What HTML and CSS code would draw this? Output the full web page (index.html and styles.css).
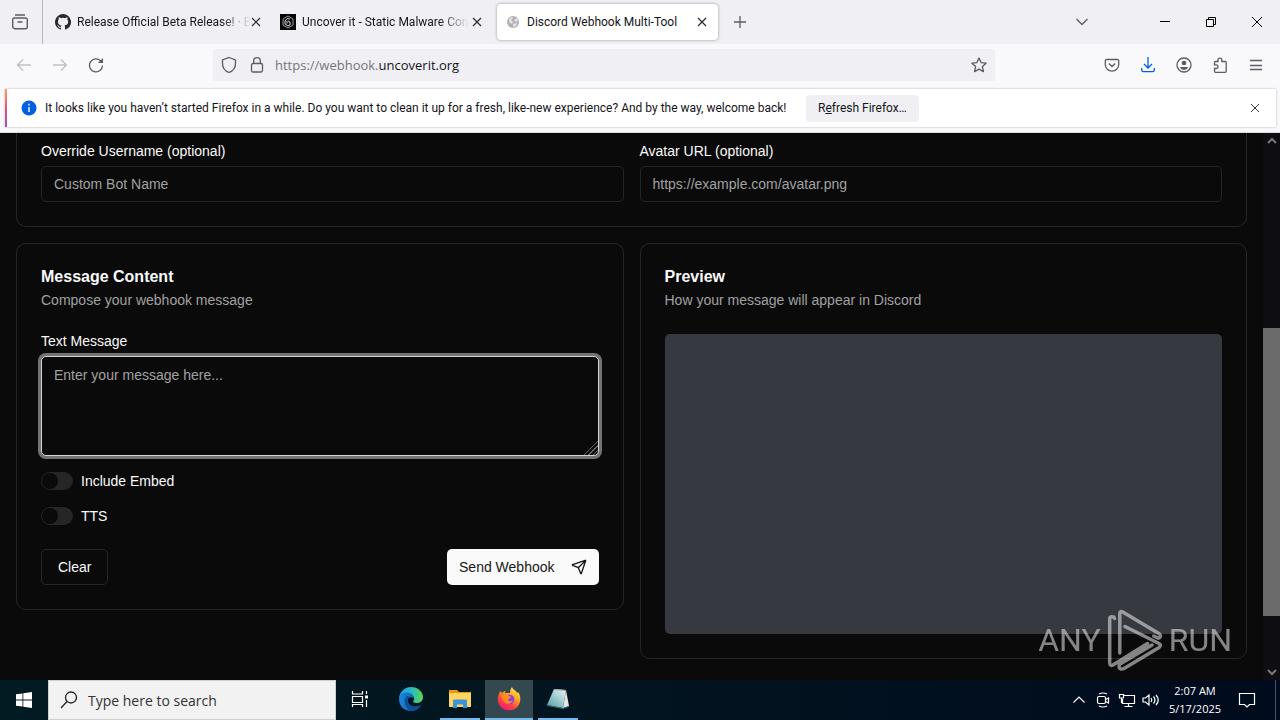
FILE: index.html
```html
<!DOCTYPE html>
<html lang="en">

<head>
    <meta charset="utf-8">
    <title>Discord Webhook Multi-Tool</title>
    <link rel="stylesheet" href="styles.css">
</head>

<body>
    <!-- tabs -->
    <header class="tabbar">
        <button class="viewBtn" aria-label="Firefox View">
            <svg width="18" height="18" viewBox="0 0 18 18" fill="none" stroke="#5b5b66" stroke-width="1.4"><path d="M4 2h10M3.400 5h11.200a1.700 1.700 0 0 1 1.700 1.700v7a2 2 0 0 1-2 2H3.700a2 2 0 0 1-2-2v-7A1.700 1.700 0 0 1 3.400 5zM6.500 9h5" /></svg>
        </button>
        <div class="tabs">
            <div class="tab">
                <svg class="favicon" viewBox="0 0 16 16" fill="#24292f"><path d="M8 0a8 8 0 0 0-2.530 15.590c.4.070.550-.170.550-.380v-1.490c-2.230.480-2.700-.950-2.700-.950-.360-.920-.890-1.170-.890-1.170-.730-.500.050-.490.050-.490.810.060 1.230.830 1.230.830.720 1.230 1.880.870 2.340.670.070-.520.280-.870.510-1.070-1.780-.200-3.640-.890-3.640-3.950 0-.870.310-1.590.820-2.150-.080-.200-.360-1.020.080-2.120 0 0 .670-.220 2.200.820a7.600 7.600 0 0 1 4 0c1.530-1.040 2.200-.820 2.200-.820.440 1.100.160 1.920.080 2.120.510.560.820 1.280.820 2.150 0 3.070-1.870 3.750-3.650 3.950.290.250.540.730.540 1.480v2.190c0 .210.150.460.550.380A8 8 0 0 0 8 0z" /></svg>
                <span class="tabTitle fade">Release Official Beta Release! · B</span>
                <button class="closeBtn" aria-label="Close tab"><svg width="10" height="10" viewBox="0 0 10 10"><path d="M1 1l8 8M9 1l-8 8" /></svg></button>
            </div>
            <div class="tab">
                <svg class="favicon" viewBox="0 0 16 16" fill="none"><path d="M0 0h16v16H0z" fill="#050505" /><path d="M8 2l5 3v6l-5 3-5-3V5z" stroke="#999" /><path d="M10 5L7 4.600 5 7v3l3 2 2-1V8L8 7M7 9.500V7" stroke="#ddd" /></svg>
                <span class="tabTitle fade">Uncover it - Static Malware Con</span>
                <button class="closeBtn" aria-label="Close tab"><svg width="10" height="10" viewBox="0 0 10 10"><path d="M1 1l8 8M9 1l-8 8" /></svg></button>
            </div>
            <div class="tab active">
                <svg class="favicon" viewBox="0 0 16 16"><circle cx="8" cy="8" r="6" fill="#b1b1b5" /><path d="M4 5c2-2 4-2 4-1L6 6l2 2-1 2-3-2zM9 6l3-2 1 3-2 1zM8 10l4-1-1 3-3 1z" fill="#e4e4e7" /></svg>
                <span class="tabTitle">Discord Webhook Multi-Tool</span>
                <button class="closeBtn" aria-label="Close tab"><svg width="10" height="10" viewBox="0 0 10 10"><path d="M1 1l8 8M9 1l-8 8" /></svg></button>
            </div>
        </div>
        <button class="toolBtn" aria-label="New tab"><svg width="14" height="14" viewBox="0 0 14 14"><path d="M7 1v12M1 7h12" /></svg></button>
        <button class="toolBtn listTabs" aria-label="List all tabs"><svg width="14" height="10" viewBox="0 0 14 10"><path d="M1.500 2L7 7.500 12.500 2" /></svg></button>
        <div class="winBtns">
            <button aria-label="Minimize"><svg width="12" height="12" viewBox="0 0 12 12"><path d="M1 5.500h10" /></svg></button>
            <button aria-label="Restore"><svg width="12" height="12" viewBox="0 0 12 12"><path d="M1.500 3.500h7v7h-7zM3.500 3.500v-2h7v7h-2" /></svg></button>
            <button aria-label="Close"><svg width="12" height="12" viewBox="0 0 12 12"><path d="M1 1l10 10M11 1L1 11" /></svg></button>
        </div>
    </header>

    <!-- address bar -->
    <nav class="navbar">
        <button class="toolBtn off" aria-label="Back"><svg width="16" height="16" viewBox="0 0 16 16"><path d="M15 8H1.500M7 2.500L1.500 8 7 13.500" /></svg></button>
        <button class="toolBtn off" aria-label="Forward"><svg width="16" height="16" viewBox="0 0 16 16"><path d="M1 8h13.500M9 2.500L14.500 8 9 13.500" /></svg></button>
        <button class="toolBtn" aria-label="Reload"><svg width="16" height="16" viewBox="0 0 16 16"><path d="M14.500 8.500A6.500 6.500 0 1 1 12.500 3.700L14 5.200" /><path d="M15 1v5h-5z" fill="#5b5b66" stroke="none" /></svg></button>
        <div class="urlbar">
            <svg width="16" height="18" viewBox="0 0 16 18"><path d="M8 1.500l6.500 2.500v3.500c0 4.500-2.500 7.500-6.500 9-4-1.500-6.500-4.500-6.500-9V4z" /></svg>
            <svg width="16" height="18" viewBox="0 0 16 18"><rect x="2.500" y="7.500" width="11" height="8.500" rx="1.500" /><path d="M4.700 7.500V5a3.300 3.300 0 0 1 6.600 0v2.500" /></svg>
            <span class="url">https://webhook.<b>uncoverit.org</b></span>
            <svg width="16" height="16" viewBox="0 0 16 16"><path d="M8 1l2.100 4.600 5 .6-3.700 3.400 1 5L8 12.100l-4.400 2.500 1-5L.9 6.200l5-.6z" stroke-linejoin="round" /></svg>
        </div>
        <button class="toolBtn" aria-label="Save to Pocket"><svg width="16" height="16" viewBox="0 0 16 16"><path d="M2.500 2.500h11a1.200 1.200 0 0 1 1.200 1.200v3.800a6.700 6.700 0 0 1-13.400 0V3.700a1.200 1.200 0 0 1 1.200-1.200zM4.800 6.500L8 9.500l3.200-3" /></svg></button>
        <button class="toolBtn downloads" aria-label="Downloads"><svg width="16" height="16" viewBox="0 0 16 16"><path d="M8 0v11M4 7l4 4 4-4M1.700 11v2a1.700 1.700 0 0 0 1.700 1.700h9.200a1.700 1.700 0 0 0 1.700-1.700v-2" /></svg></button>
        <button class="toolBtn" aria-label="Account"><svg width="16" height="16" viewBox="0 0 16 16"><circle cx="8" cy="8" r="7" /><circle cx="8" cy="6" r="2.300" fill="#5b5b66" stroke="none" /><path d="M4 10h8c-.5 2-2 2.800-4 2.800S4.500 12 4 10z" fill="#5b5b66" stroke="none" /></svg></button>
        <button class="toolBtn" aria-label="Extensions"><svg width="16" height="16" viewBox="0 0 16 16"><path d="M6 4.500V3a1.900 1.900 0 0 1 3.800 0v1.500h3.400a1 1 0 0 1 1 1v8.800a1 1 0 0 1-1 1H3.500a1 1 0 0 1-1-1v-2.800h1.700a1.800 1.800 0 0 0 0-3.600H2.500V5.500a1 1 0 0 1 1-1z" /></svg></button>
        <button class="toolBtn" aria-label="Menu"><svg width="16" height="16" viewBox="0 0 16 16"><path d="M2 3.500h12M2 8.500h12M2 12.500h12" /></svg></button>
    </nav>

    <!-- refresh notification -->
    <div class="noticeWrap">
        <div class="notice">
            <svg width="16" height="16" viewBox="0 0 16 16"><circle cx="8" cy="8" r="7.500" fill="#0060df" /><path d="M8 7v5M8 3.800v1.600" stroke="#fff" stroke-width="1.400" /></svg>
            <span class="noticeText">It looks like you haven’t started Firefox in a while. Do you want to clean it up for a fresh, like-new experience? And by the way, welcome back!</span>
            <button class="refreshBtn">R<u>e</u>fresh Firefox…</button>
            <button class="closeBtn noticeClose" aria-label="Dismiss"><svg width="8" height="8" viewBox="0 0 10 10"><path d="M0 0l10 10M10 0L0 10" /></svg></button>
        </div>
    </div>

    <!-- page -->
    <div class="viewport">
        <main class="page">
            <section class="card config">
                <div class="field">
                    <label for="username">Override Username (optional)</label>
                    <input id="username" type="text" placeholder="Custom Bot Name">
                </div>
                <div class="field">
                    <label for="avatar">Avatar URL (optional)</label>
                    <input id="avatar" type="text" placeholder="https://example.com/avatar.png">
                </div>
            </section>
            <div class="columns">
                <section class="card">
                    <h2>Message Content</h2>
                    <p>Compose your webhook message</p>
                    <div class="field">
                        <label for="message">Text Message</label>
                        <textarea id="message" placeholder="Enter your message here..."></textarea>
                    </div>
                    <div class="switches">
                        <div class="switchRow"><input id="embed" type="checkbox" role="switch"><label for="embed">Include Embed</label></div>
                        <div class="switchRow"><input id="tts" type="checkbox" role="switch"><label for="tts">TTS</label></div>
                    </div>
                    <div class="actions">
                        <button class="clear">Clear</button>
                        <button class="send">Send Webhook <svg width="16" height="16" viewBox="0 0 24 24" fill="none" stroke="#171717" stroke-width="2" stroke-linecap="round" stroke-linejoin="round"><path d="M14.536 21.686a.5.5 0 0 0 .937-.024l6.500-19a.496.496 0 0 0-.635-.635l-19 6.500a.5.5 0 0 0-.024.937l7.930 3.180a2 2 0 0 1 1.112 1.110zM21.854 2.147l-10.940 10.939" /></svg></button>
                    </div>
                </section>
                <section class="card">
                    <h2>Preview</h2>
                    <p>How your message will appear in Discord</p>
                    <div class="preview"></div>
                </section>
            </div>
        </main>
        <div class="scrollbar">
            <svg width="10" height="8" viewBox="0 0 10 8"><path d="M1 6l4-4 4 4" /></svg>
            <div class="track"><div class="thumb"></div></div>
            <svg width="10" height="8" viewBox="0 0 10 8"><path d="M1 2l4 4 4-4" /></svg>
        </div>
        <div class="watermark">
            <span>ANY</span>
            <svg width="56" height="64" viewBox="0 0 56 64" fill="none" stroke="#fff" stroke-width="3.500" stroke-linejoin="round" stroke-linecap="round"><path d="M7.500 10.500C7 8 2.700 8 2.700 11v44c0 2.500 1.500 3 3.300 2l34.500-21.500M12.800 45V5.500c0-2 1.500-2.500 3-1.500l36 21.500c2.500 1.500 2 4.500-1 4.500l-4-2M18 18.500l34 17c2 1 2 2.500 0 4L17 60.500c-3 1.500-5 0-5-2.500 0-1 1-2 2-2.500L45 37" /></svg>
            <span>RUN</span>
        </div>
    </div>

    <!-- taskbar -->
    <footer class="taskbar">
        <button class="start" aria-label="Start"><svg width="16" height="16" viewBox="0 0 16 16" fill="#fff"><path d="M0 2.300L6.500 1.400v6.200H0zM7.300 1.300L16 0v7.600H7.300zM0 8.400h6.500v6.200L0 13.700zM7.300 8.400H16V16l-8.700-1.300z" /></svg></button>
        <div class="search">
            <svg width="18" height="18" viewBox="0 0 18 18" fill="none" stroke="#222" stroke-width="1.300"><circle cx="11" cy="6.500" r="5.500" /><path d="M7 10.500L1 17" /></svg>
            <input type="text" aria-label="Search" placeholder="Type here to search">
        </div>
        <div class="apps">
            <button class="app taskView" aria-label="Task View"><svg width="18" height="18" viewBox="0 0 18 18" fill="none" stroke="#fff" stroke-width="1.200"><path d="M1.500 1v3h10V1M1.500 6.500h10v6h-10zM1.500 17v-2.500h10V17M15.500 1v3M15.500 10v7" /><path d="M14 5.500h3v3h-3z" fill="#fff" stroke="none" /></svg></button>
            <button class="app" aria-label="Edge">
                <svg width="24" height="24" viewBox="0 0 24 24">
                    <defs>
                        <linearGradient id="edgeTop" x1="0" x2="1"><stop offset="0" stop-color="#1b9de2" /><stop offset=".5" stop-color="#24b8c8" /><stop offset="1" stop-color="#5fd84c" /></linearGradient>
                        <linearGradient id="edgeLow" x1="0" x2="1"><stop offset="0" stop-color="#1b85dc" /><stop offset="1" stop-color="#0c59a4" /></linearGradient>
                    </defs>
                    <path d="M0 11C1 4 6 0 12 0c7 0 12 5 12 10 0 4-3 6-6.500 6-3 0-4-1-3-2.500 2-3-1-6.500-5-6.500-4 0-8 2-9.500 4z" fill="url(#edgeTop)" />
                    <path d="M0 12c0-4 4-7 9-6.500 3 .5 5.500 2.500 5.500 5.500C10 9 8 12 9 15c1 4 6 6.500 13 3-3 5-7 6-10 6C5 24 0 19 0 12z" fill="url(#edgeLow)" />
                    <path d="M8 9c-4 4-3 11 3 14.800 5 .500 9-2 11.300-5.800C16 21 10 19 9 15c-.700-3 .500-5 2.500-5.500z" fill="#0b4f98" />
                </svg>
            </button>
            <button class="app open" aria-label="File Explorer"><svg width="22" height="20" viewBox="0 0 22 20"><path d="M0 1h8l2 2h12v4H0z" fill="#e59a13" /><path d="M0 4h22v14H0z" fill="#ffd463" /><path d="M4 19v-7c0-1 .5-1.500 1.500-1.500h11c1 0 1.500.5 1.500 1.500v7h-4v-3.500H8V19z" fill="#3a95d8" /></svg></button>
            <button class="app open current" aria-label="Firefox">
                <svg width="24" height="24" viewBox="0 0 24 24">
                    <defs>
                        <linearGradient id="fox" x1=".8" y1="0" x2=".2" y2="1"><stop offset="0" stop-color="#fff04a" /><stop offset=".4" stop-color="#ff9a20" /><stop offset=".7" stop-color="#ff3b47" /><stop offset="1" stop-color="#e31587" /></linearGradient>
                    </defs>
                    <path d="M2 7l1-3 2 2c1-1 2-2 3.500-2L8 6l5 0c0-3 1-5 2-6 1 3 4 3 5 6l1-1c2 3 2.500 5 2.300 8A11.300 11.300 0 1 1 2 7z" fill="url(#fox)" />
                    <circle cx="12.500" cy="12.500" r="4.800" fill="#8a3fe8" />
                    <path d="M4 9c2-2 6-2 8 0l2 .5c0 2-3 2-3 3.500 1 2 4 1 5 0-1 4-6 5-9 2-2-2-2-4-3-6z" fill="#ff8a1e" />
                </svg>
            </button>
            <button class="app open" aria-label="Notepad">
                <svg width="24" height="24" viewBox="0 0 24 24">
                    <defs>
                        <linearGradient id="pad" x1="0" y1="1" x2=".8" y2="0"><stop offset="0" stop-color="#4f9aa5" /><stop offset="1" stop-color="#dceff0" /></linearGradient>
                    </defs>
                    <path d="M8 2l12 1-3 18L1 18z" fill="url(#pad)" />
                    <path d="M20 3l3 16-6 2z" fill="#e4e4e0" />
                    <path d="M8 2l12 1v1L8 3z" fill="#9aa5a8" />
                    <path d="M1 18l16 3 6-2v1l-6 2-16-3z" fill="#3b6d75" />
                </svg>
            </button>
        </div>
        <div class="tray">
            <button aria-label="Show hidden icons"><svg width="14" height="14" viewBox="0 0 14 14"><path d="M1.500 9.500L7 4l5.500 5.500" /></svg></button>
            <button aria-label="Meet Now"><svg width="14" height="16" viewBox="0 0 14 16"><rect x="1.500" y="4.500" width="8" height="7" rx="1.500" /><path d="M9.500 7.500l3-1.500v5l-3-1.500M3 2q4-2 8 0M3 14q4 2 8 0" /></svg></button>
            <button aria-label="Network"><svg width="18" height="16" viewBox="0 0 18 16"><path d="M6 3.500h10.500v8H4.500V7M10.500 11.500v3M6.500 14.500h8M1.500 2.500h4v3.500h-4zM3.500 6v5" /></svg></button>
            <button aria-label="Volume"><svg width="18" height="14" viewBox="0 0 18 14"><path d="M1 5h2.500L7 2v10L3.500 9H1zM9 5q1.500 2 0 4M11.500 3.500q3 3.500 0 7M14 2q4.500 5 0 10" /></svg></button>
            <div class="clock"><span>2:07 AM</span><span>5/17/2025</span></div>
            <button class="notes" aria-label="Notifications"><svg width="18" height="18" viewBox="0 0 18 18"><path d="M1.500 2.500h15v11h-5L9 16l-2.500-2.500h-5z" /></svg></button>
        </div>
    </footer>
</body>

</html>
```
FILE: styles.css
```css
* {
    box-sizing: border-box;
}

body {
    margin: 0;
    height: 100vh;
    display: flex;
    flex-direction: column;
    overflow: hidden;
    font-family: Roboto, "Open Sans", sans-serif;
    font-size: 12px;
    color: #15141a;
    background: #f9f9fb;
}

button {
    border: 0;
    padding: 0;
    background: none;
    font: inherit;
    color: inherit;
    display: flex;
    align-items: center;
    justify-content: center;
}

svg {
    display: block;
    flex: none;
}

/* tabs */
.tabbar {
    display: flex;
    align-items: center;
    height: 44px;
    background: #f0f0f4;
}

.viewBtn {
    width: 43px;
    height: 44px;
    padding-right: 2px;
    border-right: 1px solid #b8b8be;
}

.tabs {
    display: flex;
    gap: 4px;
    padding-left: 4px;
}

.tab {
    display: flex;
    align-items: center;
    width: 221px;
    height: 36px;
    padding: 0 8px;
    border-radius: 4px;
}

.tab.active {
    background: #fff;
    box-shadow: 0 0 3px rgba(0, 0, 0, 0.4);
}

.favicon {
    width: 16px;
    height: 16px;
    margin-right: 6px;
}

.tabTitle {
    flex: 1;
    white-space: nowrap;
}

.fade {
    -webkit-mask-image: linear-gradient(to left, transparent, #000 30px);
    mask-image: linear-gradient(to left, transparent, #000 30px);
}

.closeBtn {
    width: 16px;
    height: 24px;
}

.closeBtn svg,
.toolBtn svg,
.urlbar svg {
    fill: none;
    stroke: #5b5b66;
    stroke-width: 1.3;
}

.closeBtn svg {
    stroke: #2b2a33;
    stroke-width: 1.2;
}

.toolBtn {
    width: 36px;
    height: 32px;
}

.tabs + .toolBtn {
    margin-left: 4px;
}

.toolBtn.off svg {
    stroke: #bfbfc6;
}

.toolBtn.downloads svg {
    stroke: #0060df;
}

.listTabs {
    margin-left: auto;
    margin-right: 42px;
}

.winBtns {
    display: flex;
}

.winBtns button {
    width: 46px;
    height: 44px;
}

.winBtns svg {
    fill: none;
    stroke: #000;
}

/* address bar */
.navbar {
    display: flex;
    align-items: center;
    height: 41px;
    padding: 0 6px;
}

.urlbar {
    display: flex;
    flex: 1;
    align-items: center;
    gap: 12px;
    height: 32px;
    margin: 0 99px;
    padding: 0 8px;
    background: #f0f0f4;
    border-radius: 2px;
}

.url {
    flex: 1;
    margin-left: -2px;
    font-family: "Open Sans", sans-serif;
    font-size: 13px;
    color: #75747c;
}

.url b {
    font-weight: 400;
    color: #15141a;
}

/* notification */
.noticeWrap {
    height: 48px;
    padding: 4px 4px 6px 5px;
    border-bottom: 1px solid #dcdce0;
}

.notice {
    display: flex;
    align-items: center;
    height: 38px;
    padding: 0 13px 0 14px;
    background: #fff;
    border-left: 2px solid;
    border-image: linear-gradient(#ffa45e, #e3527f, #9059c8) 1;
    box-shadow: 0 0 2px rgba(0, 0, 0, 0.3);
}

.noticeText {
    min-width: 742px;
    margin: 0 19px 0 8px;
    white-space: nowrap;
}

.refreshBtn {
    display: block;
    height: 27px;
    padding: 0 12px;
    background: #f0f0f4;
    border-radius: 4px;
}

.noticeClose {
    margin-left: auto;
}

/* page */
.viewport {
    position: relative;
    display: flex;
    flex: 1;
    min-height: 0;
    background: #0a0a0a;
    color: #fafafa;
    font-family: "Liberation Sans", Arial, sans-serif;
    font-size: 14px;
}

.page {
    flex: 1;
    padding: 0 16px;
}

.card {
    padding: 24px;
    border: 1px solid #262626;
    border-radius: 10px;
}

.config {
    display: grid;
    grid-template-columns: 1fr 1fr;
    gap: 16px;
    padding-top: 11px;
    border-top: 0;
    border-radius: 0 0 10px 10px;
}

.columns {
    display: grid;
    grid-template-columns: 1fr 1fr;
    align-items: start;
    gap: 16px;
    margin-top: 16px;
}

.field {
    display: flex;
    flex-direction: column;
    gap: 8px;
}

label {
    line-height: 14px;
}

.field input,
textarea {
    width: 100%;
    height: 36px;
    padding: 0 12px;
    background: #0a0a0a;
    border: 1px solid #262626;
    border-radius: 5px;
    color: inherit;
    font: inherit;
}

textarea {
    display: block;
    height: 100px;
    padding: 8px 12px;
    line-height: 20px;
    border-color: #d4d4d4;
    box-shadow: 0 0 0 3px #737373;
    resize: vertical;
}

textarea::-webkit-resizer {
    background: linear-gradient(135deg, transparent 52%, #666 52% 56%, transparent 56% 66%, #666 66% 70%, transparent 70% 80%, #666 80% 84%, transparent 84%);
}

.field input::placeholder,
textarea::placeholder {
    color: #a1a1a1;
}

h2 {
    margin: 0 0 4px;
    font-size: 16px;
    line-height: 18px;
}

.card p {
    margin: 0 0 24px;
    line-height: 20px;
    color: #a1a1a1;
}

.switches {
    display: grid;
    gap: 17px;
    margin: 16px 0 24px;
}

.switchRow {
    display: flex;
    align-items: center;
    gap: 8px;
    height: 18px;
}

.switchRow input {
    appearance: none;
    width: 32px;
    height: 18px;
    margin: 0;
    padding: 1px;
    background: #262626;
    border-radius: 9px;
}

.switchRow input::before {
    content: "";
    display: block;
    width: 16px;
    height: 16px;
    background: #0a0a0a;
    border-radius: 50%;
}

.actions {
    display: flex;
    justify-content: space-between;
}

.actions button {
    height: 36px;
    padding: 0 16px;
    border: 1px solid #262626;
    border-radius: 5px;
}

.actions .send {
    gap: 16px;
    padding: 0 12px;
    border: 0;
    background: #fafafa;
    color: #171717;
}

.preview {
    height: 300px;
    background: #36393f;
    border-radius: 5px;
}

.scrollbar {
    display: flex;
    flex-direction: column;
    align-items: center;
    gap: 5px;
    width: 17px;
    padding: 4px 0;
    background: #0e0e12;
}

.scrollbar svg {
    fill: none;
    stroke: #77777c;
    stroke-width: 2;
}

.track {
    display: flex;
    flex: 1;
    flex-direction: column;
    width: 17px;
}

.track::before {
    content: "";
    flex: 178;
}

.track::after {
    content: "";
    flex: 47;
}

.thumb {
    flex: 288;
    background: #6b6b6b;
}

.watermark {
    position: absolute;
    right: 48px;
    bottom: 8px;
    display: flex;
    align-items: center;
    gap: 6px;
    opacity: 0.5;
    color: #fff;
    font-family: Roboto, sans-serif;
    font-size: 32px;
}

/* taskbar */
.taskbar {
    display: flex;
    height: 40px;
    background: linear-gradient(to right, #021a22, #02141f 50%, #000b1e);
    color: #fff;
}

.start {
    width: 48px;
}

.search {
    display: flex;
    align-items: center;
    gap: 10px;
    width: 288px;
    padding: 0 11px;
    background: #f2f2f2;
    border: 1px solid #cfcfcf;
}

.search input {
    flex: 1;
    min-width: 0;
    padding: 0;
    border: 0;
    background: none;
    font-family: "Open Sans", sans-serif;
    font-size: 14px;
}

.search input::placeholder {
    color: #333;
}

.apps {
    display: flex;
    gap: 1px;
}

.app {
    width: 48px;
    border-bottom: 2px solid transparent;
}

.taskView {
    margin-right: 2px;
}

.app.open {
    background: linear-gradient(#76b9ed, #76b9ed) center bottom / 40px 2px no-repeat border-box;
}

.app.current {
    background-color: #344850;
    background-size: 48px 2px;
}

.tray {
    display: flex;
    margin-left: auto;
    padding-right: 4px;
}

.tray button {
    width: 24px;
}

.tray svg {
    fill: none;
    stroke: #fff;
    stroke-width: 1.2;
}

.clock {
    display: flex;
    flex-direction: column;
    align-items: center;
    justify-content: center;
    width: 64px;
    font-family: "Open Sans", sans-serif;
    font-size: 11px;
    line-height: 18px;
}

.tray .notes {
    width: 49px;
    padding-right: 8px;
    border-right: 1px solid #4a5260;
}
```
